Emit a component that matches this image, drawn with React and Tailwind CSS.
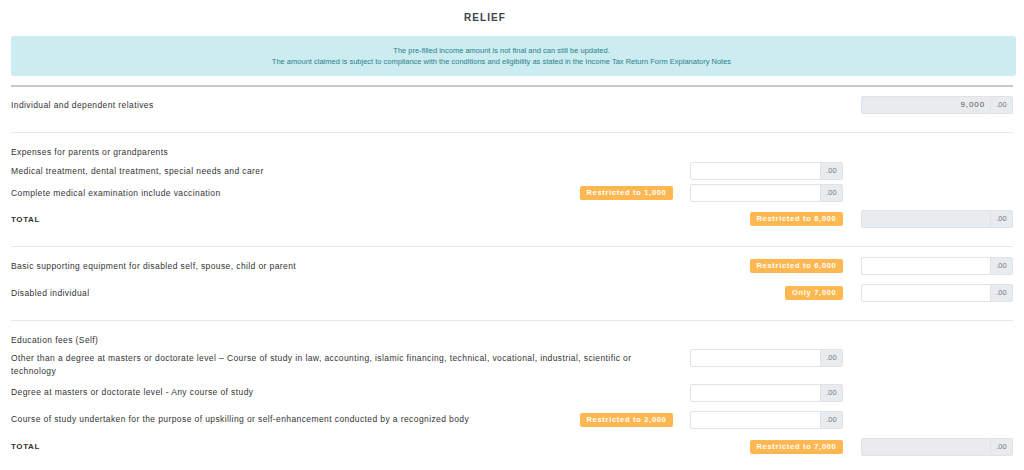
import React from 'react';

const Badge = ({ children }) => (
  <span className="inline-flex items-center h-[14px] px-[6.5px] rounded-[2px] bg-[#ffb752] text-white text-[7.5px] font-bold tracking-[0.7px] leading-none whitespace-nowrap">
    {children}
  </span>
);

const Amount = ({ value, disabled }) => (
  <div
    className={`flex h-[18px] w-full rounded-[2px] border border-[#dfe3e7] ${
      disabled ? 'bg-[#e9ecef]' : 'bg-white'
    }`}
  >
    <div className="flex-1 flex items-center justify-end pr-[5px] text-[8px] tracking-[0.9px] text-[#555]">
      {value}
    </div>
    <div className="w-[22px] flex items-center justify-center border-l border-[#dfe3e7] bg-[#e9ecef] text-[7.5px] text-[#777]">
      .00
    </div>
  </div>
);

const Row = ({ label, bold, badge, mid, midBadge, right, rightDisabled, rightValue, className = '' }) => (
  <div className={`flex items-start ${className}`}>
    <div className="flex-1 flex items-start justify-between gap-4">
      <div
        className={`pt-[2.5px] leading-[13px] text-[#333] ${
          bold ? 'font-bold tracking-[0.6px] text-[8px]' : 'tracking-[0.4px] text-[8.5px]'
        }`}
      >
        {label}
      </div>
      {badge && (
        <div className="h-[18px] flex items-center shrink-0">
          <Badge>{badge}</Badge>
        </div>
      )}
    </div>
    <div className="w-[153px] ml-[17px] h-[18px] flex items-center justify-end">
      {mid && <Amount />}
      {midBadge && <Badge>{midBadge}</Badge>}
    </div>
    <div className="w-[152px] ml-[18px]">
      {right && <Amount disabled={rightDisabled} value={rightValue} />}
    </div>
  </div>
);

const Heading = ({ children }) => (
  <div className="mt-[13px] leading-[12px] text-[8.5px] tracking-[0.4px] text-[#333]">{children}</div>
);

const Divider = () => <div className="mt-[18px] h-px bg-[#e7e9eb]" />;

export default function App() {
  return (
    <div
      className="w-[1024px] h-[470px] bg-white overflow-hidden px-[11px]"
      style={{ fontFamily: '"Liberation Sans", Arial, sans-serif' }}
    >
      <div className="pt-[12px] leading-[12px] text-center text-[10px] font-bold tracking-[1.1px] text-[#3a434c] pr-[54px]">
        RELIEF
      </div>

      <div className="mt-[12px] h-[40px] w-[1005px] pr-[24px] rounded-[3px] bg-[#cbecf0] flex flex-col items-center justify-center text-[7.5px] leading-[11px] text-[#2f7f8b]">
        <div>The pre-filled income amount is not final and can still be updated.</div>
        <div>The amount claimed is subject to compliance with the conditions and eligibility as stated in the Income Tax Return Form Explanatory Notes</div>
      </div>

      <div className="mt-[9px] h-[2px] bg-[#c8c8c8]" />

      <Row className="mt-[9px]" label="Individual and dependent relatives" right rightDisabled rightValue="9,000" />

      <Divider />
      <Heading>Expenses for parents or grandparents</Heading>
      <Row className="mt-[4px]" label="Medical treatment, dental treatment, special needs and carer" mid />
      <Row className="mt-[4px]" label="Complete medical examination include vaccination" badge="Restricted to 1,000" mid />
      <Row className="mt-[8px]" label="TOTAL" bold midBadge="Restricted to 8,000" right rightDisabled />

      <Divider />
      <Row className="mt-[10px]" label="Basic supporting equipment for disabled self, spouse, child or parent" midBadge="Restricted to 6,000" right />
      <Row className="mt-[9px]" label="Disabled individual" midBadge="Only 7,000" right />

      <Divider />
      <Heading>Education fees (Self)</Heading>
      <Row
        className="mt-[3px]"
        label="Other than a degree at masters or doctorate level – Course of study in law, accounting, islamic financing, technical, vocational, industrial, scientific or technology"
        mid
      />
      <Row className="mt-[6px]" label="Degree at masters or doctorate level - Any course of study" mid />
      <Row
        className="mt-[9px]"
        label="Course of study undertaken for the purpose of upskilling or self-enhancement conducted by a recognized body"
        badge="Restricted to 2,000"
        mid
      />
      <Row className="mt-[9px]" label="TOTAL" bold midBadge="Restricted to 7,000" right rightDisabled />
    </div>
  );
}
